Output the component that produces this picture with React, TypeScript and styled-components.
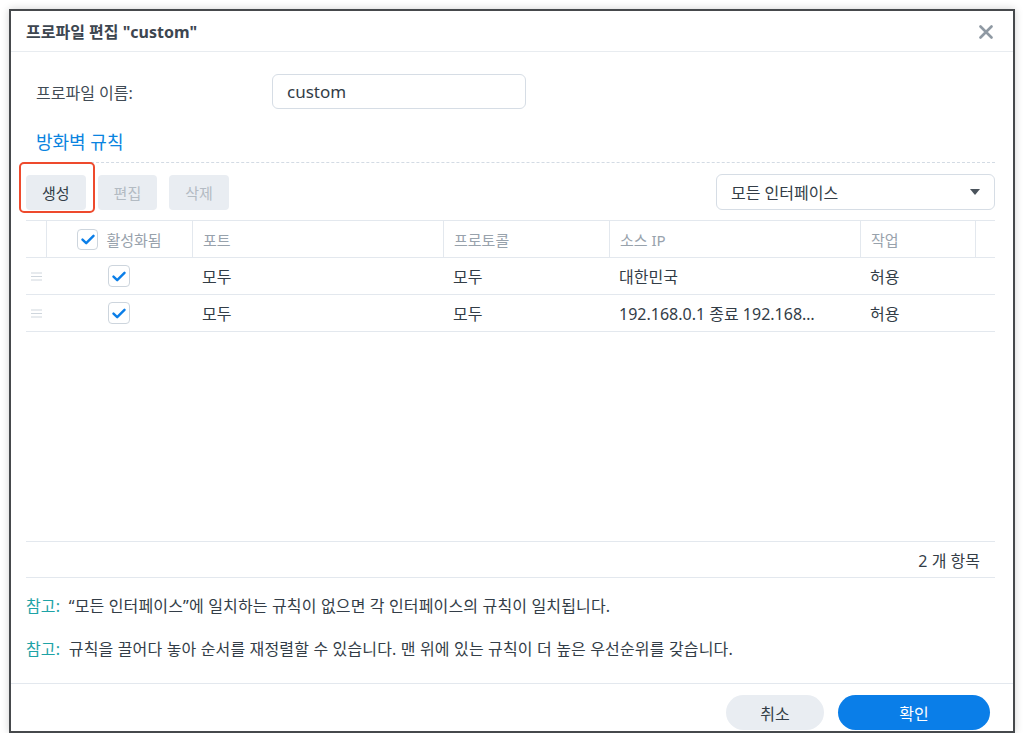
import React from "react";
import styled, {createGlobalStyle} from "styled-components";

const GlobalStyle = createGlobalStyle`
  html, body {
    margin: 0;
    padding: 0;
    background: #ffffff;
  }
  body {
    font-family: "Noto Sans", "Noto Sans CJK KR", sans-serif;
    color: #333d47;
  }
  * {
    box-sizing: border-box;
  }
`

const rules = [
	{port: "모두", protocol: "모두", source: "대한민국", action: "허용"},
	{port: "모두", protocol: "모두", source: "192.168.0.1 종료 192.168.0.255", action: "허용"},
]

const CheckMark = () => (
	<svg width="14" height="11" viewBox="0 0 14 11">
		<path d="M1.5 5.6 L5.2 9.2 L12.5 1.8" fill="none" stroke="#0a7ee8" strokeWidth="2.4"
		      strokeLinecap="round" strokeLinejoin="round"/>
	</svg>
)

const DragHandle = () => (
	<svg width="11" height="9" viewBox="0 0 11 9">
		<path d="M0 1 H11 M0 4.5 H11 M0 8 H11" stroke="#cfd6dd" strokeWidth="1"/>
	</svg>
)

const App = () => {
	return (
		<>
			<GlobalStyle/>
			<Frame>
				<Header>
					<Title>프로파일 편집 "custom"</Title>
					<CloseButton>
						<svg width="14" height="14" viewBox="0 0 14 14">
							<path d="M1.5 1.5 L12.5 12.5 M12.5 1.5 L1.5 12.5" stroke="#8f99a3" strokeWidth="2.6"
							      strokeLinecap="round"/>
						</svg>
					</CloseButton>
				</Header>
				<Body>
					<NameRow>
						<NameLabel>프로파일 이름:</NameLabel>
						<NameInput>custom</NameInput>
					</NameRow>
					<SectionTitle>방화벽 규칙</SectionTitle>
					<Toolbar>
						<ButtonGroup>
							<Highlighted>
								<ToolButton>생성</ToolButton>
							</Highlighted>
							<ToolButton disabled>편집</ToolButton>
							<ToolButton disabled>삭제</ToolButton>
						</ButtonGroup>
						<Select>
							<span>모든 인터페이스</span>
							<Caret/>
						</Select>
					</Toolbar>
					<Table>
						<HeadRow>
							<HeadCell $width={20}/>
							<HeadCell $width={146} $center>
								<CheckBox $small><CheckMark/></CheckBox>
								<span>활성화됨</span>
							</HeadCell>
							<HeadCell $width={251}>포트</HeadCell>
							<HeadCell $width={166}>프로토콜</HeadCell>
							<HeadCell $width={251}>소스 IP</HeadCell>
							<HeadCell $width={115}>작업</HeadCell>
							<HeadCell $width={20} $last/>
						</HeadRow>
						{rules.map((r, i) => (
							<Row key={i}>
								<Cell $width={20} $center><DragHandle/></Cell>
								<Cell $width={146} $center>
									<CheckBox><CheckMark/></CheckBox>
								</Cell>
								<Cell $width={251}>{r.port}</Cell>
								<Cell $width={166}>{r.protocol}</Cell>
								<Cell $width={251}><Ellipsis>{r.source}</Ellipsis></Cell>
								<Cell $width={115}>{r.action}</Cell>
							</Row>
						))}
					</Table>
					<CountBar>2 개 항목</CountBar>
					<Note><NoteLabel>참고:</NoteLabel>  “모든 인터페이스”에 일치하는 규칙이 없으면 각 인터페이스의 규칙이 일치됩니다.</Note>
					<Note><NoteLabel>참고:</NoteLabel>  규칙을 끌어다 놓아 순서를 재정렬할 수 있습니다. 맨 위에 있는 규칙이 더 높은 우선순위를 갖습니다.</Note>
				</Body>
				<Footer>
					<FooterButton>취소</FooterButton>
					<FooterButton $primary>확인</FooterButton>
				</Footer>
			</Frame>
		</>
	)
}

export default App


const Frame = styled.div`
  margin: 9px 0 0 9px;
  width: 1006px;
  height: 724px;
  border: 2px solid #46494c;
  background: #ffffff;
  box-shadow: 0 0 8px rgba(0, 0, 0, 0.18);
  display: flex;
  flex-direction: column;
  overflow: hidden;
`

const Header = styled.div`
  height: 41px;
  flex-shrink: 0;
  display: flex;
  align-items: center;
  justify-content: space-between;
  padding: 0 20px 0 15px;
  border-bottom: 1px solid #e8ecf0;
`

const Title = styled.div`
  font-size: 16px;
  font-weight: 700;
  color: #3d4650;
`

const CloseButton = styled.div`
  display: flex;
  align-items: center;
  margin-top: 2px;
`

const Body = styled.div`
  flex: 1;
  display: flex;
  flex-direction: column;
  padding: 0 18px 0 15px;
`

const NameRow = styled.div`
  display: flex;
  align-items: center;
  margin-top: 22px;
  padding-left: 10px;
`

const NameLabel = styled.div`
  width: 236px;
  font-size: 16px;
  color: #414b55;
`

const NameInput = styled.div`
  width: 254px;
  height: 35px;
  border: 1px solid #d6dde5;
  border-radius: 6px;
  padding: 0 14px;
  display: flex;
  align-items: center;
  font-size: 17px;
  color: #333d47;
`

const SectionTitle = styled.div`
  margin-top: 19px;
  padding: 0 10px 8px;
  font-size: 18px;
  color: #0a84e0;
  border-bottom: 1px dashed #d3dbe4;
`

const Toolbar = styled.div`
  display: flex;
  justify-content: space-between;
  align-items: center;
  margin-top: 11px;
`

const ButtonGroup = styled.div`
  display: flex;
  gap: 12px;
`

const Highlighted = styled.div`
  position: relative;
  display: flex;

  &::after {
    content: "";
    position: absolute;
    top: -13px;
    left: -7px;
    right: -9px;
    bottom: -3px;
    border: 2.5px solid #ee4a2d;
    border-radius: 5px;
    pointer-events: none;
  }
`

const ToolButton = styled.button`
  height: 35px;
  padding: 0 16px;
  border: none;
  border-radius: 4px;
  background: #e9edf2;
  font-family: inherit;
  font-size: 15px;
  color: ${({disabled}) => disabled ? "#b3bbc3" : "#333d47"};
`

const Select = styled.div`
  width: 279px;
  height: 36px;
  border: 1px solid #d6dde5;
  border-radius: 6px;
  display: flex;
  align-items: center;
  justify-content: space-between;
  padding: 0 14px 0 14px;
  font-size: 16px;
  color: #333d47;
`

const Caret = styled.div`
  width: 0;
  height: 0;
  border-left: 5px solid transparent;
  border-right: 5px solid transparent;
  border-top: 6px solid #4a535c;
`

const Table = styled.div`
  margin-top: 10px;
  height: 322px;
  border-top: 1px solid #e3e8ee;
  border-bottom: 1px solid #e3e8ee;
  display: flex;
  flex-direction: column;
`

const HeadRow = styled.div`
  display: flex;
  height: 37px;
  border-bottom: 1px solid #e3e8ee;
`

const HeadCell = styled.div<{ $width: number, $center?: boolean, $last?: boolean }>`
  width: ${({$width}) => $width}px;
  flex-shrink: 0;
  display: flex;
  align-items: center;
  justify-content: ${({$center}) => $center ? "center" : "flex-start"};
  gap: 8px;
  padding: 0 ${({$center}) => $center ? 0 : 10}px;
  border-right: ${({$last}) => $last ? "none" : "1px solid #e3e8ee"};
  font-size: 15px;
  color: #98a2ac;
`

const Row = styled.div`
  display: flex;
  height: 37px;
  border-bottom: 1px solid #e3e8ee;
`

const Cell = styled.div<{ $width: number, $center?: boolean }>`
  width: ${({$width}) => $width}px;
  flex-shrink: 0;
  display: flex;
  align-items: center;
  justify-content: ${({$center}) => $center ? "center" : "flex-start"};
  padding: 0 ${({$center}) => $center ? 0 : 10}px;
  font-size: 16px;
  color: #333d47;
  min-width: 0;
`

const Ellipsis = styled.span`
  max-width: 197px;
  white-space: nowrap;
  overflow: hidden;
  text-overflow: ellipsis;
`

const CheckBox = styled.div<{ $small?: boolean }>`
  width: ${({$small}) => $small ? 21 : 22}px;
  height: ${({$small}) => $small ? 21 : 22}px;
  border: 1px solid #cdd5dd;
  border-radius: 4px;
  background: #ffffff;
  display: flex;
  align-items: center;
  justify-content: center;
`

const CountBar = styled.div`
  height: 36px;
  border-bottom: 1px solid #e3e8ee;
  display: flex;
  align-items: center;
  justify-content: flex-end;
  padding-right: 15px;
  font-size: 16px;
  color: #333d47;
`

const Note = styled.div`
  margin-top: 14px;
  height: 26px;
  display: flex;
  align-items: center;
  white-space: pre;
  font-size: 16px;
  letter-spacing: 0.15px;
  color: #333d47;

  & + & {
    margin-top: 17px;
  }
`

const NoteLabel = styled.span`
  color: #1ea3a6;
`

const Footer = styled.div`
  height: 48px;
  flex-shrink: 0;
  border-top: 1px solid #e3e8ee;
  display: flex;
  justify-content: flex-end;
  align-items: flex-start;
  gap: 14px;
  padding: 11px 23px 0 0;
`

const FooterButton = styled.button<{ $primary?: boolean }>`
  height: 35px;
  width: ${({$primary}) => $primary ? 152 : 98}px;
  border: none;
  border-radius: 18px;
  background: ${({$primary}) => $primary ? "#0a7ee8" : "#e9edf2"};
  color: ${({$primary}) => $primary ? "#ffffff" : "#333d47"};
  font-family: inherit;
  font-size: 16px;
`
